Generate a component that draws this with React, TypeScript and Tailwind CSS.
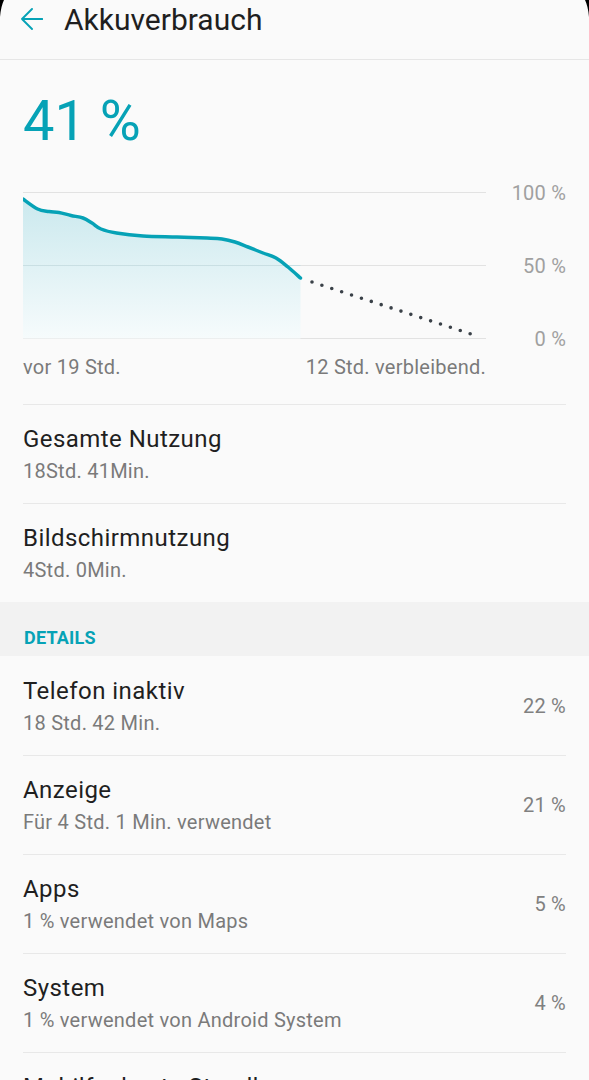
import React from "react";

const TEAL = "#06a2b6";

type Row = { title: string; sub: string; pct?: string };

const details: Row[] = [
  { title: "Telefon inaktiv", sub: "18 Std. 42 Min.", pct: "22 %" },
  { title: "Anzeige", sub: "Für 4 Std. 1 Min. verwendet", pct: "21 %" },
  { title: "Apps", sub: "1 % verwendet von Maps", pct: "5 %" },
  { title: "System", sub: "1 % verwendet von Android System", pct: "4 %" },
  { title: "Mobilfunknetz-Standby", sub: "3 % verwendet", pct: "3 %" },
];

function ListRow({ r, first }: { r: Row; first?: boolean }) {
  return (
    <div
      className={
        "mx-[23px] flex items-center justify-between pb-[18px] " +
        (first ? "pt-[19px]" : "border-t border-[#e8e8e8] pt-[18px]")
      }
    >
      <div className="flex flex-col">
        <div className="text-[24px] leading-[32px] tracking-[0.45px] text-[#1f1f1f]">{r.title}</div>
        <div className="mt-[2px] text-[20px] leading-[28px] tracking-[0.25px] text-[#7a7a7a]">{r.sub}</div>
      </div>
      {r.pct && <div className="text-[20px] leading-[28px] tracking-[0.25px] text-[#808080]">{r.pct}</div>}
    </div>
  );
}

function smooth(pts: [number, number][]): string {
  let d = `M${pts[0][0]} ${pts[0][1]}`;
  for (let i = 0; i < pts.length - 1; i++) {
    const p0 = pts[i - 1] || pts[i];
    const p1 = pts[i];
    const p2 = pts[i + 1];
    const p3 = pts[i + 2] || p2;
    const c1x = p1[0] + (p2[0] - p0[0]) / 6;
    const c1y = p1[1] + (p2[1] - p0[1]) / 6;
    const c2x = p2[0] - (p3[0] - p1[0]) / 6;
    const c2y = p2[1] - (p3[1] - p1[1]) / 6;
    d += ` C${c1x.toFixed(2)} ${c1y.toFixed(2)} ${c2x.toFixed(2)} ${c2y.toFixed(2)} ${p2[0]} ${p2[1]}`;
  }
  return d;
}

function Chart() {
  const pts: [number, number][] = [
    [0, 18],
    [14.6, 28],
    [26, 30.5],
    [36, 31.5],
    [48, 34.5],
    [60, 37],
    [69, 42],
    [78, 48],
    [93.5, 52],
    [120, 55],
    [154, 56],
    [184, 57],
    [199, 58],
    [212, 61],
    [225, 66],
    [240, 72],
    [253, 77],
    [265, 86],
    [277.5, 97],
  ];
  const line = smooth(pts);
  const area = line + " L277.5 157.5 L0 157.5 Z";
  return (
    <svg width="463" height="170" viewBox="0 0 463 170" className="block">
      <defs>
        <linearGradient id="fillg" x1="0" y1="0" x2="0" y2="1">
          <stop offset="0%" stopColor="#cbe9ee" />
          <stop offset="100%" stopColor="#f6fbfc" />
        </linearGradient>
      </defs>
      <line x1="0" y1="11.5" x2="463" y2="11.5" stroke="#e2e2e2" strokeWidth="1" />
      <line x1="0" y1="84.5" x2="463" y2="84.5" stroke="#e2e2e2" strokeWidth="1" />
      <line x1="0" y1="157.5" x2="463" y2="157.5" stroke="#e2e2e2" strokeWidth="1" />
      <path d={area} fill="url(#fillg)" />
      <line x1="0" y1="84.5" x2="277.5" y2="84.5" stroke="#c9dfe3" strokeWidth="1" />
      <path
        d={line}
        fill="none"
        stroke={TEAL}
        strokeWidth="3.5"
        strokeLinejoin="round"
        strokeLinecap="round"
      />
      <line
        x1="289"
        y1="101"
        x2="457"
        y2="156"
        stroke="#3a4148"
        strokeWidth="3.6"
        strokeLinecap="round"
        strokeDasharray="0 10.4"
      />
    </svg>
  );
}

export default function App() {
  return (
    <div
      className="relative min-h-[1080px] w-[589px] overflow-hidden bg-[#fafafa]"
      style={{ fontFamily: "Roboto, 'Noto Sans', Arial, sans-serif" }}
    >
      {/* screen corners */}
      <svg className="absolute left-0 top-0" width="6" height="18" viewBox="0 0 6 18">
        <path d="M0 0 H4 Q1 6 0 17 Z" fill="#000" />
      </svg>
      <svg className="absolute right-0 top-0" width="6" height="18" viewBox="0 0 6 18">
        <path d="M6 0 H2 Q5 6 6 17 Z" fill="#000" />
      </svg>

      {/* header */}
      <div className="flex h-[60px] items-start border-b border-[#e6e6e6] pt-px">
        <svg
          className="ml-[21px] mt-[7px]"
          width="22"
          height="22"
          viewBox="0 0 22 22"
          fill="none"
          stroke={TEAL}
          strokeWidth="1.9"
          strokeLinecap="round"
          strokeLinejoin="round"
        >
          <path d="M1 11 H21.3 M11 1 L1 11 L11 21" />
        </svg>
        <div className="ml-[21px] text-[30px] leading-[38px] text-[#1f1f1f]">Akkuverbrauch</div>
      </div>

      {/* percentage */}
      <div className="pl-[23px] pt-[29px] text-[56px] leading-[64px]" style={{ color: TEAL }}>
        41 %
      </div>

      {/* chart */}
      <div className="mt-[28px] flex pl-[23px]">
        <Chart />
        <div className="flex h-[170px] w-[80px] flex-col items-end justify-between text-[20px] leading-[24px] tracking-[0.2px] text-[#a0a0a0]">
          <span>100 %</span>
          <span>50 %</span>
          <span>0 %</span>
        </div>
      </div>
      <div className="ml-[23px] mt-[2px] flex w-[463px] justify-between text-[20px] leading-[28px] tracking-[0.25px] text-[#7a7a7a]">
        <span>vor 19 Std.</span>
        <span>12 Std. verbleibend.</span>
      </div>

      <div className="mt-[23px]">
        <ListRow r={{ title: "Gesamte Nutzung", sub: "18Std. 41Min." }} />
        <ListRow r={{ title: "Bildschirmnutzung", sub: "4Std. 0Min." }} />
      </div>

      <div
        className="h-[54px] bg-[#f2f2f2] pl-[24px] pt-[25px] text-[18px] font-bold leading-[22px] tracking-[0.2px]"
        style={{ color: TEAL }}
      >
        DETAILS
      </div>

      <div>
        {details.map((r, i) => (
          <ListRow key={r.title} r={r} first={i === 0} />
        ))}
      </div>
    </div>
  );
}
